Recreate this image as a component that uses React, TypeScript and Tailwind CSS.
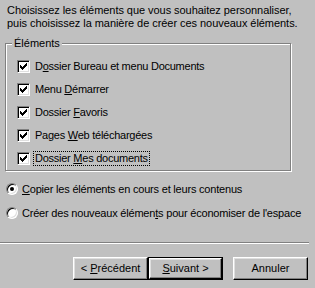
import React from "react";

function Check() {
  const px: [number, number][] = [
    [6, 0],
    [5, 1], [6, 1],
    [0, 2], [4, 2], [5, 2], [6, 2],
    [0, 3], [1, 3], [3, 3], [4, 3], [5, 3],
    [0, 4], [1, 4], [2, 4], [3, 4], [4, 4],
    [1, 5], [2, 5], [3, 5],
    [2, 6],
  ];
  return (
    <svg width="7" height="7" viewBox="0 0 7 7" shapeRendering="crispEdges" className="block">
      {px.map(([x, y], i) => (
        <rect key={i} x={x} y={y} width="1" height="1" fill="#000" />
      ))}
    </svg>
  );
}

function CheckBox() {
  return (
    <div className="w-[13px] h-[13px] shrink-0 bg-white border border-t-[#808080] border-l-[#808080] border-b-white border-r-white shadow-[inset_1px_1px_0_#000,inset_-1px_-1px_0_#dfdfdf] flex items-start justify-start pl-[2px] pt-[2px]">
      <Check />
    </div>
  );
}

function Radio({ checked }: { checked?: boolean }) {
  return (
    <div className="w-[12px] h-[12px] shrink-0 rounded-full bg-white border border-t-[#808080] border-l-[#808080] border-b-white border-r-white shadow-[inset_1px_1px_0_#000,inset_-1px_-1px_0_#dfdfdf] flex items-center justify-center">
      {checked && <div className="w-[4px] h-[4px] rounded-full bg-black" />}
    </div>
  );
}

function Btn({ children, def }: { children: React.ReactNode; def?: boolean }) {
  if (def) {
    return (
      <div className="w-[75px] h-[23px] border border-black">
        <div className="w-full h-full border border-t-white border-l-white border-b-black border-r-black shadow-[inset_-1px_-1px_0_#808080,inset_1px_1px_0_#dfdfdf] flex items-center justify-center">
          <span>{children}</span>
        </div>
      </div>
    );
  }
  return (
    <div className="w-[75px] h-[23px] border border-t-white border-l-white border-b-black border-r-black shadow-[inset_-1px_-1px_0_#808080,inset_1px_1px_0_#dfdfdf] flex items-center justify-center">
      <span>{children}</span>
    </div>
  );
}

export default function App() {
  const items: React.ReactNode[] = [
    <>D<u>o</u>ssier Bureau et menu Documents</>,
    <>Menu <u>D</u>émarrer</>,
    <>Dossier <u>F</u>avoris</>,
    <>Pages <u>W</u>eb téléchargées</>,
    <>Dossier <u>M</u>es documents</>,
  ];
  return (
    <div
      className="w-[315px] h-[288px] bg-[#c0c0c0] text-black text-[11px] leading-[13px] overflow-hidden"
      style={{ fontFamily: '"Liberation Sans", Arial, sans-serif' }}
    >
      <div className="h-[43px] pl-[7px] pt-[4px] tracking-[-0.05px]">
        <p>Choisissez les éléments que vous souhaitez personnaliser,</p>
        <p>puis choisissez la manière de créer ces nouveaux éléments.</p>
      </div>
      <div className="relative ml-[5px] w-[286px] h-[128px] border border-[#808080] shadow-[inset_1px_1px_0_#fff,1px_1px_0_#fff]">
        <div className="absolute left-[6px] top-[-7px] px-[2px] bg-[#c0c0c0]">Éléments</div>
        <div className="pt-[11px] pl-[11px] flex flex-col tracking-[-0.25px]">
          {items.map((it, i) => (
            <div key={i} className="h-[23px] flex items-center">
              <CheckBox />
              {i === 4 ? (
                <span className="ml-[4px] px-[1px] outline outline-1 outline-dotted outline-black">{it}</span>
              ) : (
                <span className="ml-[5px]">{it}</span>
              )}
            </div>
          ))}
        </div>
      </div>
      <div className="mt-[6px] pl-[6px] flex flex-col tracking-[-0.2px]">
        <div className="h-[24px] flex items-center">
          <Radio checked />
          <span className="ml-[4px]"><u>C</u>opier les éléments en cours et leurs contenus</span>
        </div>
        <div className="h-[24px] flex items-center">
          <Radio />
          <span className="ml-[4px]">Créer des nouveaux élémen<u>t</u>s pour économiser de l'espace</span>
        </div>
      </div>
      <div className="mt-[17px] w-[309px] h-[2px] border-t border-t-[#808080] border-b border-b-white" />
      <div className="mt-[13px] pl-[73px] flex">
        <Btn>&lt; <u>P</u>récédent</Btn>
        <Btn def><u>S</u>uivant &gt;</Btn>
        <div className="ml-[10px]">
          <Btn>Annuler</Btn>
        </div>
      </div>
    </div>
  );
}
